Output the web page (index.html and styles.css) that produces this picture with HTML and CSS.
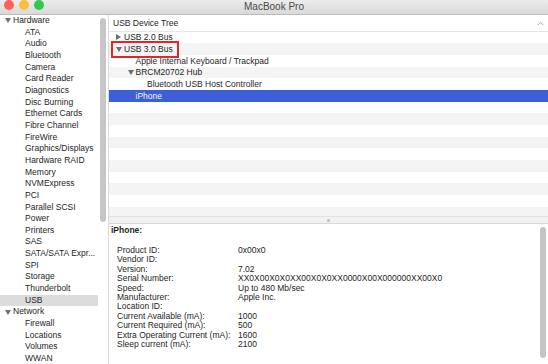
FILE: index.html
```html
<!DOCTYPE html>
<html>
<head>
    <title>MacBook Pro</title>
    <link rel="stylesheet" href="styles.css">
</head>
<body>
    <div class="window">
        <div class="titlebar">
            <div class="lights">
                <span class="light red"></span>
                <span class="light yellow"></span>
                <span class="light green"></span>
            </div>
            <span class="title">MacBook Pro</span>
        </div>

        <div class="main">
            <div class="sidebar">
                <div class="side-row group"><span class="tri down"></span>Hardware</div>
                <div class="side-row">ATA</div>
                <div class="side-row">Audio</div>
                <div class="side-row">Bluetooth</div>
                <div class="side-row">Camera</div>
                <div class="side-row">Card Reader</div>
                <div class="side-row">Diagnostics</div>
                <div class="side-row">Disc Burning</div>
                <div class="side-row">Ethernet Cards</div>
                <div class="side-row">Fibre Channel</div>
                <div class="side-row">FireWire</div>
                <div class="side-row">Graphics/Displays</div>
                <div class="side-row">Hardware RAID</div>
                <div class="side-row">Memory</div>
                <div class="side-row">NVMExpress</div>
                <div class="side-row">PCI</div>
                <div class="side-row">Parallel SCSI</div>
                <div class="side-row">Power</div>
                <div class="side-row">Printers</div>
                <div class="side-row">SAS</div>
                <div class="side-row">SATA/SATA Expr...</div>
                <div class="side-row">SPI</div>
                <div class="side-row">Storage</div>
                <div class="side-row">Thunderbolt</div>
                <div class="side-row selected">USB</div>
                <div class="side-row group"><span class="tri down"></span>Network</div>
                <div class="side-row">Firewall</div>
                <div class="side-row">Locations</div>
                <div class="side-row">Volumes</div>
                <div class="side-row">WWAN</div>
                <div class="side-thumb"></div>
            </div>

            <div class="content">
                <div class="tree">
                    <div class="tree-head">
                        USB Device Tree
                        <svg class="scroll-up" width="7" height="5" viewBox="0 0 7 5">
                            <polyline points="0.8,4 3.5,1.2 6.2,4" fill="none" stroke="#a6a6a6" stroke-width="1"/>
                        </svg>
                    </div>
                    <div class="tree-rows">
                        <div class="tree-row lvl0"><span class="twisty"><span class="tri right"></span></span>USB 2.0 Bus</div>
                        <div class="tree-row lvl0"><span class="twisty"><span class="tri down"></span></span>USB 3.0 Bus</div>
                        <div class="tree-row lvl1"><span class="twisty"></span>Apple Internal Keyboard / Trackpad</div>
                        <div class="tree-row lvl1"><span class="twisty"><span class="tri down"></span></span>BRCM20702 Hub</div>
                        <div class="tree-row lvl2"><span class="twisty"></span>Bluetooth USB Host Controller</div>
                        <div class="tree-row lvl1 selected"><span class="twisty"></span>iPhone</div>
                        <div class="tree-row"></div>
                        <div class="tree-row"></div>
                        <div class="tree-row"></div>
                        <div class="tree-row"></div>
                        <div class="tree-row"></div>
                        <div class="tree-row"></div>
                        <div class="tree-row"></div>
                        <div class="tree-row"></div>
                        <div class="tree-row"></div>
                        <div class="tree-row"></div>
                    </div>
                    <div class="mark"></div>
                </div>

                <div class="splitter"><span class="dot"></span></div>

                <div class="detail">
                    <div class="detail-title">iPhone:</div>
                    <div class="props">
                        <span>Product ID:</span><span>0x00x0</span>
                        <span>Vendor ID:</span><span></span>
                        <span>Version:</span><span>7.02</span>
                        <span>Serial Number:</span><span>XX0X00X0X0XX00X0X0XX0000X00X000000XX00X0</span>
                        <span>Speed:</span><span>Up to 480 Mb/sec</span>
                        <span>Manufacturer:</span><span>Apple Inc.</span>
                        <span>Location ID:</span><span></span>
                        <span>Current Available (mA):</span><span>1000</span>
                        <span>Current Required (mA):</span><span>500</span>
                        <span>Extra Operating Current (mA):</span><span>1600</span>
                        <span>Sleep current (mA):</span><span>2100</span>
                    </div>
                    <div class="detail-thumb"></div>
                </div>
            </div>
        </div>
    </div>
</body>
</html>
```

FILE: styles.css
```css
* {
    box-sizing: border-box;
}

body {
    margin: 0;
    font-family: "Liberation Sans", Arial, sans-serif;
    font-size: 8.5px;
    color: #222;
    background-color: #fff;
    overflow: hidden;
}

.window {
    width: 548px;
    height: 364px;
    display: flex;
    flex-direction: column;
    overflow: hidden;
}

/* title bar */
.titlebar {
    height: 15px;
    flex: none;
    position: relative;
    display: flex;
    align-items: center;
    justify-content: center;
    background: linear-gradient(#ececec, #d9d9d9);
    border-bottom: 1px solid #bcbcbc;
}

.lights {
    position: absolute;
    left: 4px;
    top: 0;
    display: flex;
    gap: 5px;
}

.light {
    width: 10px;
    height: 10px;
    border-radius: 50%;
}

.red { background-color: #fc605b; }
.yellow { background-color: #fdbc40; }
.green { background-color: #34c84a; }

.title {
    font-size: 10px;
    color: #4a4a4a;
    margin-top: -1px;
}

.main {
    flex: 1;
    min-height: 0;
    display: flex;
}

/* sidebar */
.sidebar {
    width: 109px;
    flex: none;
    position: relative;
    overflow: hidden;
    border-right: 1px solid #dadada;
}

.side-row {
    width: 98px;
    height: 11.67px;
    line-height: 11.67px;
    padding-left: 25px;
    white-space: nowrap;
    color: #262626;
}

.side-row.group {
    padding-left: 5px;
    display: flex;
    align-items: center;
}

.side-row.group .tri {
    margin-right: 2px;
}

.side-row.selected {
    background-color: #dcdcdc;
}

.side-thumb {
    position: absolute;
    left: 100px;
    top: 3px;
    width: 6px;
    height: 204px;
    border-radius: 3px;
    background-color: #c6c6c6;
}

/* disclosure triangles */
.tri {
    display: inline-block;
    width: 0;
    height: 0;
}

.tri.down {
    border-left: 3px solid transparent;
    border-right: 3px solid transparent;
    border-top: 5px solid #6f6f6f;
}

.tri.right {
    border-top: 3px solid transparent;
    border-bottom: 3px solid transparent;
    border-left: 5px solid #6f6f6f;
}

/* right side */
.content {
    flex: 1;
    min-width: 0;
    display: flex;
    flex-direction: column;
}

.tree {
    height: 201px;
    flex: none;
    position: relative;
    overflow: hidden;
}

.tree-head {
    height: 16.67px;
    line-height: 16px;
    padding-left: 4px;
    border-bottom: 1px solid #e6e6e6;
    position: relative;
    color: #262626;
}

.scroll-up {
    position: absolute;
    right: 4px;
    top: 6px;
}

.tree-row {
    height: 11.67px;
    display: flex;
    align-items: center;
    white-space: nowrap;
    color: #262626;
}

.tree-row:nth-child(even) {
    background-color: #f4f4f4;
}

.tree-row.selected {
    background-color: #3c5ed6;
    color: #f2f4ff;
}

.twisty {
    width: 8px;
    flex: none;
    display: flex;
    align-items: center;
}

.lvl0 { padding-left: 7px; }
.lvl1 { padding-left: 18.5px; }
.lvl2 { padding-left: 30px; }

.mark {
    position: absolute;
    left: 2px;
    top: 26px;
    width: 68px;
    height: 17px;
    border: 2px solid #e3262b;
}

.splitter {
    height: 7px;
    flex: none;
    display: flex;
    align-items: center;
    justify-content: center;
    background-color: #f1f1f1;
    border-top: 1px solid #e2e2e2;
}

.dot {
    width: 3px;
    height: 3px;
    border-radius: 50%;
    background-color: #bdbdbd;
}

.detail {
    flex: 1;
    position: relative;
    border-top: 1px solid #d8d8d8;
    padding: 1.5px 0 0 2px;
    line-height: 9.4px;
    color: #1e1e1e;
}

.detail-title {
    font-weight: bold;
    margin-bottom: 11px;
}

.props {
    display: grid;
    grid-template-columns: 121px auto;
    padding-left: 6px;
    white-space: nowrap;
}

.detail-thumb {
    position: absolute;
    right: 2px;
    top: 3px;
    width: 6px;
    height: 131px;
    border-radius: 3px;
    background-color: #c4c4c4;
}
```
